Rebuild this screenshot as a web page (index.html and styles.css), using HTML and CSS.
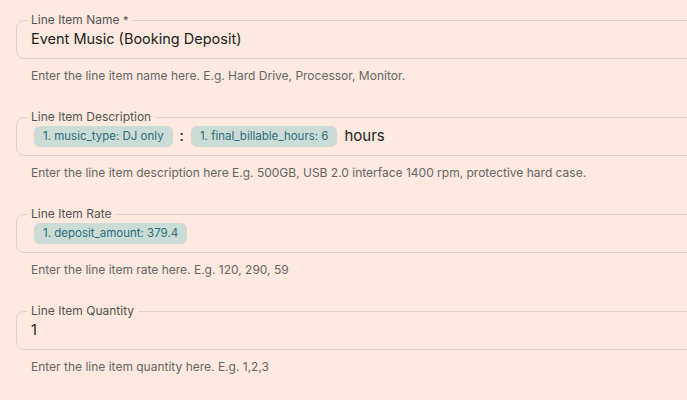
FILE: index.html
```html
<!DOCTYPE html>
<html>
<head>
<meta charset="utf-8">
<link rel="stylesheet" href="styles.css">
</head>
<body>
<div class="form">
  <div class="field">
    <fieldset class="box">
      <legend class="label">Line Item Name <span class="req">*</span></legend>
      <div class="value">Event Music (Booking Deposit)</div>
    </fieldset>
    <p class="help">Enter the line item name here. E.g. Hard Drive, Processor, Monitor.</p>
  </div>
  <div class="field">
    <fieldset class="box">
      <legend class="label">Line Item Description</legend>
      <div class="value chips">
        <span class="chip">1. music_type: DJ only</span>
        <span class="sep">:</span>
        <span class="chip">1. final_billable_hours: 6</span>
        <span class="txt">hours</span>
      </div>
    </fieldset>
    <p class="help">Enter the line item description here E.g. 500GB, USB 2.0 interface 1400 rpm, protective hard case.</p>
  </div>
  <div class="field">
    <fieldset class="box">
      <legend class="label">Line Item Rate</legend>
      <div class="value chips">
        <span class="chip">1. deposit_amount: 379.4</span>
      </div>
    </fieldset>
    <p class="help">Enter the line item rate here. E.g. 120, 290, 59</p>
  </div>
  <div class="field">
    <fieldset class="box">
      <legend class="label">Line Item Quantity</legend>
      <div class="value">1</div>
    </fieldset>
    <p class="help">Enter the line item quantity here. E.g. 1,2,3</p>
  </div>
</div>
</body>
</html>
```
FILE: styles.css
```css
html, body {
  margin: 0;
  padding: 0;
  background: #fde9df;
  overflow: hidden;
}
body {
  font-family: Inter, "Liberation Sans", sans-serif;
  color: #222;
}
.form {
  width: 760px;
  padding: 12px 0 0 16px;
}
.field {
  margin-bottom: 25px;
}
.box {
  margin: 0;
  padding: 0 14px 8px 14px;
  border: 1px solid #e6d0c6;
  border-radius: 8px;
  min-width: 0;
}
.label {
  font-size: 12px;
  line-height: 16px;
  color: #555;
  padding: 0 4px;
  margin-left: -4px;
}
.req {
  font-size: 11px;
}
.value {
  font-size: 14.5px;
  line-height: 22px;
  height: 22px;
  color: #222;
}
.chips {
  display: flex;
  align-items: center;
  gap: 6px;
  padding-left: 3px;
}
.chip {
  background: #cadcd5;
  color: #2f6b7c;
  font-size: 11.5px;
  line-height: 21px;
  padding: 0 9px;
  border-radius: 6px;
}
.sep {
  font-size: 15px;
  padding: 0 1px;
}
.txt {
  font-size: 15px;
  margin-left: 1px;
}
.help {
  margin: 9px 0 0 15px;
  font-size: 12px;
  line-height: 16px;
  color: #666;
}
```
